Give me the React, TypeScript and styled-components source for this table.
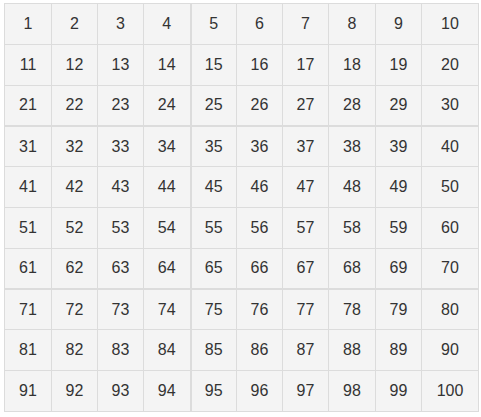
import styled, { createGlobalStyle } from "styled-components";

const GlobalStyle = createGlobalStyle`
  body {
    margin: 0;
    background: #fff;
    font-family: "Liberation Sans", Arial, sans-serif;
  }
`;

const Wrapper = styled.div`
  padding: 3px 0 0 4px;
`;

const Table = styled.table`
  border-collapse: collapse;
  table-layout: fixed;
  width: 474px;
  border: 1px solid #dcdcdc;
`;

const Row = styled.tr`
  height: 40.8px;
`;

const Cell = styled.td<{ $thickRight?: boolean; $thickBottom?: boolean }>`
  padding: 0;
  border: 1px solid #dcdcdc;
  border-right-width: ${({ $thickRight }) => ($thickRight ? "2px" : "1px")};
  border-bottom-width: ${({ $thickBottom }) => ($thickBottom ? "2px" : "1px")};
  background: #f4f4f4;
  color: #333;
  font-size: 16px;
  text-align: center;
  vertical-align: middle;
`;

const widths = [47, 46, 46, 47, 46, 46, 46, 47, 46, 57];

export default function App() {
  const rows = Array.from({ length: 10 }, (_, r) =>
    Array.from({ length: 10 }, (_, c) => r * 10 + c + 1)
  );

  return (
    <Wrapper>
      <GlobalStyle />
      <Table>
        <colgroup>
          {widths.map((w, i) => (
            <col key={i} style={{ width: w }} />
          ))}
        </colgroup>
        <tbody>
          {rows.map((row, r) => (
            <Row key={r}>
              {row.map((n, c) => (
                <Cell key={n} $thickRight={c === 3} $thickBottom={r === 2 || r === 6}>
                  {n}
                </Cell>
              ))}
            </Row>
          ))}
        </tbody>
      </Table>
    </Wrapper>
  );
}
